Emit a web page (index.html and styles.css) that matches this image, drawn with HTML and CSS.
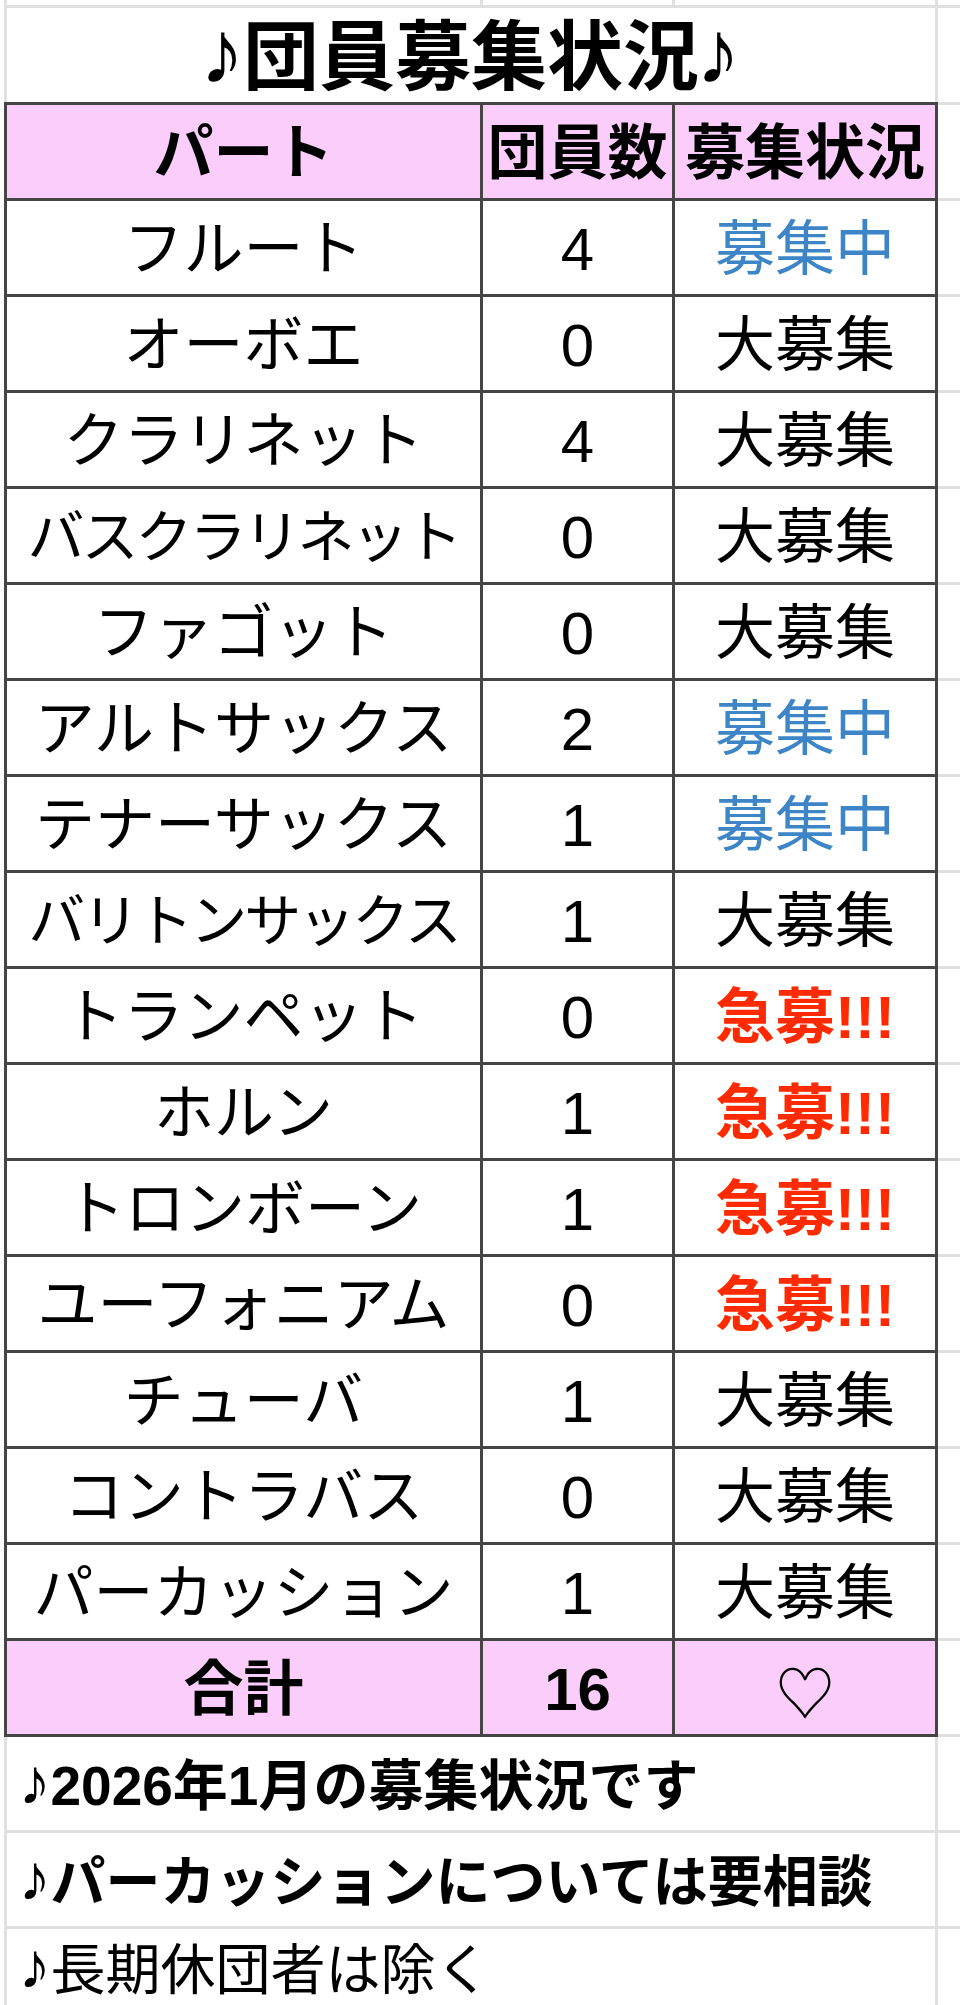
FILE: index.html
```html
<!DOCTYPE html>
<html lang="ja">
<head>
<meta charset="utf-8">
<title>団員募集状況</title>
<link rel="stylesheet" href="styles.css">
</head>
<body>
<div class="sheet">
  <div class="row row-top">
    <div class="cell c-a"></div><div class="cell c-b"></div><div class="cell c-c"></div><div class="cell c-x"></div>
  </div>
  <div class="row row-title">
    <div class="cell c-merged title"><span class="note">♪</span>団員募集状況<span class="note">♪</span></div>
    <div class="cell c-x"></div>
  </div>

  <div class="row tr row-head">
    <div class="cell c-a">パート</div><div class="cell c-b">団員数</div><div class="cell c-c">募集状況</div><div class="cell c-x"></div>
  </div>

  <div class="row tr"><div class="cell c-a">フルート</div><div class="cell c-b num">4</div><div class="cell c-c st-blue">募集中</div><div class="cell c-x"></div></div>
  <div class="row tr"><div class="cell c-a">オーボエ</div><div class="cell c-b num">0</div><div class="cell c-c">大募集</div><div class="cell c-x"></div></div>
  <div class="row tr"><div class="cell c-a">クラリネット</div><div class="cell c-b num">4</div><div class="cell c-c">大募集</div><div class="cell c-x"></div></div>
  <div class="row tr"><div class="cell c-a long">バスクラリネット</div><div class="cell c-b num">0</div><div class="cell c-c">大募集</div><div class="cell c-x"></div></div>
  <div class="row tr"><div class="cell c-a">ファゴット</div><div class="cell c-b num">0</div><div class="cell c-c">大募集</div><div class="cell c-x"></div></div>
  <div class="row tr"><div class="cell c-a">アルトサックス</div><div class="cell c-b num">2</div><div class="cell c-c st-blue">募集中</div><div class="cell c-x"></div></div>
  <div class="row tr"><div class="cell c-a">テナーサックス</div><div class="cell c-b num">1</div><div class="cell c-c st-blue">募集中</div><div class="cell c-x"></div></div>
  <div class="row tr"><div class="cell c-a long">バリトンサックス</div><div class="cell c-b num">1</div><div class="cell c-c">大募集</div><div class="cell c-x"></div></div>
  <div class="row tr"><div class="cell c-a">トランペット</div><div class="cell c-b num">0</div><div class="cell c-c st-red">急募!!!</div><div class="cell c-x"></div></div>
  <div class="row tr"><div class="cell c-a">ホルン</div><div class="cell c-b num">1</div><div class="cell c-c st-red">急募!!!</div><div class="cell c-x"></div></div>
  <div class="row tr"><div class="cell c-a">トロンボーン</div><div class="cell c-b num">1</div><div class="cell c-c st-red">急募!!!</div><div class="cell c-x"></div></div>
  <div class="row tr"><div class="cell c-a">ユーフォニアム</div><div class="cell c-b num">0</div><div class="cell c-c st-red">急募!!!</div><div class="cell c-x"></div></div>
  <div class="row tr"><div class="cell c-a">チューバ</div><div class="cell c-b num">1</div><div class="cell c-c">大募集</div><div class="cell c-x"></div></div>
  <div class="row tr"><div class="cell c-a">コントラバス</div><div class="cell c-b num">0</div><div class="cell c-c">大募集</div><div class="cell c-x"></div></div>
  <div class="row tr"><div class="cell c-a">パーカッション</div><div class="cell c-b num">1</div><div class="cell c-c">大募集</div><div class="cell c-x"></div></div>

  <div class="row tr row-total">
    <div class="cell c-a">合計</div><div class="cell c-b num">16</div><div class="cell c-c heart">♡</div><div class="cell c-x"></div>
  </div>

  <div class="row row-note">
    <div class="cell c-merged note-text bold"><span class="note">♪</span>2026年1月の募集状況です</div>
    <div class="cell c-x"></div>
  </div>
  <div class="row row-note">
    <div class="cell c-merged note-text bold"><span class="note">♪</span>パーカッションについては要相談</div>
    <div class="cell c-x"></div>
  </div>
  <div class="row row-note row-last">
    <div class="cell c-merged note-text"><span class="note">♪</span>長期休団者は除く</div>
    <div class="cell c-x"></div>
  </div>
</div>
</body>
</html>
```

FILE: styles.css
```css
html, body {
  margin: 0;
  padding: 0;
  background: #ffffff;
}

.sheet {
  width: 960px;
  height: 2005px;
  overflow: hidden;
  font-family: "Liberation Sans", "Noto Sans CJK JP", sans-serif;
  color: #000000;
}

.row {
  display: grid;
  grid-template-columns: 476px 192px 266px 22px;
  padding-left: 4px;
}

.cell {
  box-sizing: border-box;
  display: flex;
  align-items: center;
  justify-content: center;
  white-space: nowrap;
  line-height: 1.2;
}

/* top partial row of the sheet */
.row-top {
  height: 5px;
}
.row-top .c-a,
.row-top .c-b,
.row-top .c-c {
  border-left: 3px solid #e0e0e0;
}
.row-top .c-c {
  border-right: 3px solid #e0e0e0;
}

/* title row */
.row-title {
  height: 97px;
}
.row-title .cell {
  border-top: 3px solid #e0e0e0;
}
.c-merged {
  grid-column: span 3;
  border-left: 3px solid #e0e0e0;
  border-right: 3px solid #e0e0e0;
}
.title {
  font-size: 76px;
  font-weight: 700;
  padding-top: 4px;
}

/* table rows */
.tr {
  height: 96px;
  font-size: 60px;
}
.tr .c-a,
.tr .c-b,
.tr .c-c {
  border-left: 3px solid #454545;
  border-bottom: 3px solid #454545;
  padding-top: 4px;
}
.tr .c-c {
  border-right: 3px solid #454545;
}
.tr .c-x {
  border-bottom: 3px solid #e0e0e0;
}

.row-head {
  height: 99px;
}
.row-head .c-a,
.row-head .c-b,
.row-head .c-c {
  border-top: 3px solid #454545;
  background: #fbcdfb;
  font-weight: 700;
}
.row-head .c-x {
  border-top: 3px solid #e0e0e0;
}

.row-total .c-a,
.row-total .c-b,
.row-total .c-c {
  background: #fbcdfb;
  font-weight: 700;
}

.long {
  font-size: 57px;
  letter-spacing: -3px;
}

.num {
  font-family: "Liberation Sans", sans-serif;
}

.st-blue {
  color: #3d85c6;
}
.st-red {
  color: #ff2a00;
  font-weight: 700;
}

.heart {
  font-family: "Noto Sans CJK JP", sans-serif;
}
.row-total .heart {
  font-weight: 400;
}

/* note rows below the table */
.row-note {
  height: 96px;
}
.row-note .cell {
  border-bottom: 3px solid #e0e0e0;
}
.row-last {
  height: 76px;
}
.row-last .cell {
  border-bottom: none;
}
.note-text {
  justify-content: flex-start;
  padding-left: 14px;
  padding-top: 4px;
  font-size: 55px;
  font-weight: 400;
}
.note-text.bold {
  font-weight: 700;
}
.row-last .note-text {
  padding-top: 6px;
}

.note {
  display: inline-block;
  font-family: "Liberation Sans", sans-serif;
  transform: scale(1.18);
  transform-origin: 50% 85%;
  margin-right: 2px;
}
```
